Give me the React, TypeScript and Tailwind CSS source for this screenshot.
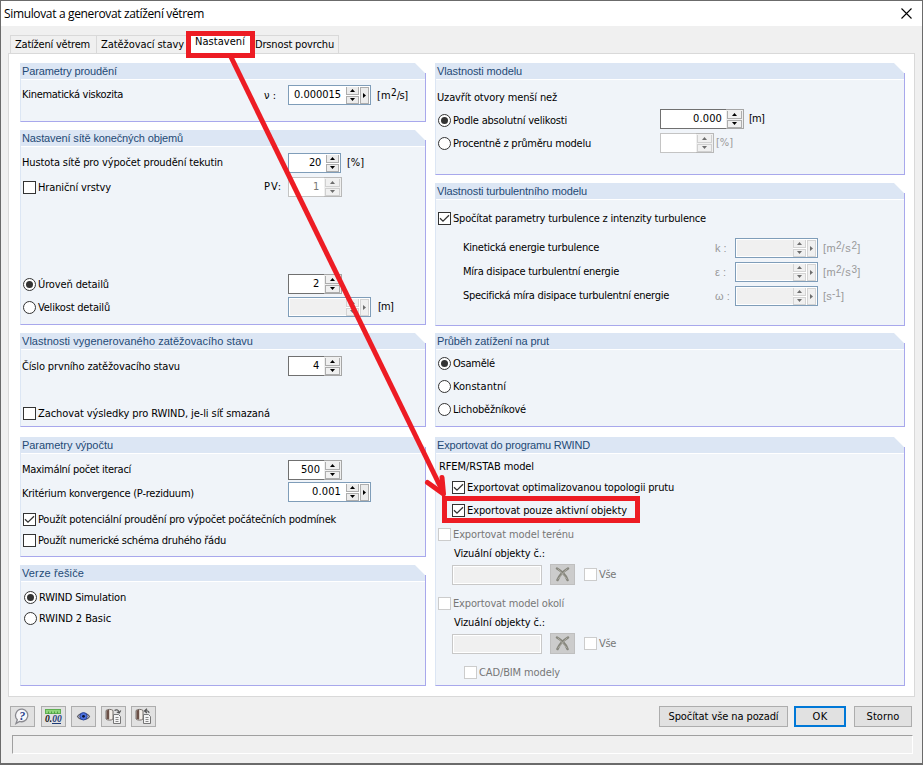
import { useLayoutEffect, useRef } from "react";
import type { ReactNode } from "react";

/** Text whose tracking is adjusted so that it spans `w` pixels. */
function Label({ w, className = "", children }: { w: number; className?: string; children: string }) {
  const ref = useRef<HTMLSpanElement>(null);
  useLayoutEffect(() => {
    const el = ref.current;
    if (!el) return;
    el.style.letterSpacing = "0px";
    const natural = el.getBoundingClientRect().width;
    el.style.letterSpacing = `${(w - natural) / children.length}px`;
  }, [w, children]);
  return (
    <span ref={ref} className={`inline-block shrink-0 whitespace-pre ${className}`}>
      {children}
    </span>
  );
}

function Panel({ title, w, className, children }: { title: string; w: number; className: string; children: ReactNode }) {
  return (
    <section className={`flex flex-col ${className}`}>
      <header className="flex h-4 shrink-0 items-center bg-[#dce6f4] pl-[2px] text-[#1f4a76] [clip-path:polygon(0_0,calc(100%-11px)_0,calc(100%-1px)_10px,100%_10px,100%_100%,0_100%)] [font-family:'Liberation_Sans',Arial,sans-serif] border-r border-[#a8a8ec]">
        <Label w={w} className="text-[11px] leading-4">{title}</Label>
      </header>
      <div className="flex grow flex-col border-r border-b border-l border-r-[#a8a8ec] border-b-[#a8a8ec] border-l-[#dce6f4] bg-[#f0f4f9] shadow-[inset_0_1px_0_#fff] pl-px">
        {children}
      </div>
    </section>
  );
}

function Row({ className = "", children }: { className?: string; children: ReactNode }) {
  return <div className={`flex h-5 shrink-0 items-center ${className}`}>{children}</div>;
}

function Tick({ label, w, checked, disabled, className = "" }: { label: string; w: number; checked?: boolean; disabled?: boolean; className?: string }) {
  return (
    <label className={`flex items-center gap-[2px] ${className}`}>
      <span className={`flex size-[13px] shrink-0 items-center justify-center border bg-white ${disabled ? "border-[#ccc]" : "border-[#333]"}`}>
        {checked && (
          <svg width="11" height="11" viewBox="0 0 11 11" fill="none" stroke="#333" strokeWidth="1.3">
            <path d="M1 5.2 4 8.2 10 2.2" />
          </svg>
        )}
      </span>
      <Label w={w} className={disabled ? "pt-px text-[#777]" : "pt-px"}>{label}</Label>
    </label>
  );
}

function Radio({ label, w, checked, className = "" }: { label: string; w: number; checked?: boolean; className?: string }) {
  return (
    <label className={`flex items-center gap-[2px] ${className}`}>
      <span className="flex size-[13px] shrink-0 items-center justify-center rounded-full border border-[#333] bg-white">
        {checked && <span className="size-[7px] rounded-full bg-[#333]" />}
      </span>
      <Label w={w} className="pt-px">{label}</Label>
    </label>
  );
}

function SpinButtons({ disabled, framed }: { disabled?: boolean; framed?: boolean }) {
  const tone = disabled ? "border-[#d4d4d4] bg-[#f0f0f0]" : "border-[#adadad] bg-[#ececec]";
  const fill = disabled ? "#6d6d6d" : "#000";
  return (
    <span className={`flex w-[13px] shrink-0 flex-col gap-px ${framed ? "mr-px" : ""}`}>
      <span className={`flex h-2 items-center justify-center border-r border-b border-l ${tone}`}>
        <svg width="5" height="3" viewBox="0 0 5 3" fill={fill}><path d="M2.5 0 5 3H0Z" /></svg>
      </span>
      <span className={`flex h-2 items-center justify-center border ${tone}`}>
        <svg width="5" height="3" viewBox="0 0 5 3" fill={fill}><path d="M2.5 3 5 0H0Z" /></svg>
      </span>
    </span>
  );
}

/** Numeric field with an integrated blue frame; `menu` adds the arrow button. */
function FramedSpin({ value, w, menu, disabled, className }: { value?: string; w?: number; menu?: boolean; disabled?: boolean; className: string }) {
  return (
    <span className={`flex h-5 shrink-0 items-center border border-[#7f9db9] bg-white p-px ${className}`}>
      <span className={`flex h-4 grow items-center justify-end pr-[5px] ${disabled ? "bg-[#f0f0f0]" : ""}`}>
        {value && <Label w={w ?? 12}>{value}</Label>}
      </span>
      <SpinButtons disabled={disabled} framed={menu} />
      {menu && (
        <span className={`flex h-[17px] w-[9px] items-center justify-center border ${disabled ? "border-[#d4d4d4] bg-[#f0f0f0]" : "border-[#adadad] bg-[#ececec]"}`}>
          <svg width="3" height="5" viewBox="0 0 3 5" fill={disabled ? "#6d6d6d" : "#000"}><path d="M0 0 3 2.5 0 5Z" /></svg>
        </span>
      )}
    </span>
  );
}

/** Edit box with a separate up-down control on its right. */
function BuddySpin({ value, w, disabled, className }: { value?: string; w?: number; disabled?: boolean; className: string }) {
  return (
    <span className={`flex h-5 shrink-0 ${className}`}>
      <span className={`flex grow items-center justify-end border-y border-l bg-white pr-1 ${disabled ? "border-[#c4c4c4] text-[#777]" : "border-[#707070]"}`}>
        {value && <Label w={w ?? 7}>{value}</Label>}
      </span>
      <span className={`flex w-[18px] items-center justify-center border-y border-r bg-[#f0f0f0] ${disabled ? "border-[#b8b8b8]" : "border-[#a6a6a6]"}`}>
        <span className="flex w-[15px] flex-col gap-px">
          <span className={`flex h-2 items-center justify-center border-r border-b border-l ${disabled ? "border-[#d0d0d0]" : "border-[#adadad]"}`}>
            <svg width="5" height="3" viewBox="0 0 5 3" fill={disabled ? "#6d6d6d" : "#000"}><path d="M2.5 0 5 3H0Z" /></svg>
          </span>
          <span className={`flex h-2 items-center justify-center border ${disabled ? "border-[#d0d0d0]" : "border-[#adadad]"}`}>
            <svg width="5" height="3" viewBox="0 0 5 3" fill={disabled ? "#6d6d6d" : "#000"}><path d="M2.5 3 5 0H0Z" /></svg>
          </span>
        </span>
      </span>
    </span>
  );
}

function VisualObjects() {
  return (
    <Row className="h-[21px] pl-[15px]">
      <span className="h-5 w-[90px] border border-[#c8c8c8] bg-[#f0f0f0] shadow-[inset_0_0_0_1px_#fff]" />
      <span className="ml-2 flex h-[21px] w-[25px] items-center justify-center border border-[#bfbfbf] bg-[#ccc]">
        <svg width="15" height="15" viewBox="0 0 15 15" fill="none" stroke="#85857c" strokeLinecap="round">
          <path d="M2 1.5C5 3 11 8 12.5 13M13 1.500C9 4 4 9 2.500 13" strokeWidth="2.500" />
          <path d="M3 2 12 12M12 2 3 12" stroke="#b5b4ac" strokeWidth=".8" />
        </svg>
      </span>
      <Tick label="Vše" w={17} disabled className="ml-[9px]" />
    </Row>
  );
}

function Turbulence({ label, w, symbol, unit, power, second, unitW, className = "" }: { label: string; w: number; symbol: string; unit: string; power: string; second?: string; unitW: number; className?: string }) {
  return (
    <Row className={className}>
      <div className="w-[278px] pl-[26px]"><Label w={w}>{label}</Label></div>
      <span className="w-[20px] whitespace-pre text-[#999] [font-family:'Liberation_Sans',Arial,sans-serif]">{symbol} :</span>
      <FramedSpin disabled menu className="w-[83px]" />
      <span className="flex pl-[5px] text-[#999] [font-family:'Liberation_Sans',Arial,sans-serif]">
        <Label w={unitW}>{unit}</Label>
        <span className="-mt-[2px] text-[10px]">{power}</span>
        {second && <Label w={10}>/s</Label>}
        {second && <span className="-mt-[2px] text-[10px]">{second}</span>}
        <span>]</span>
      </span>
    </Row>
  );
}

function ToolButton({ children, className = "" }: { children: ReactNode; className?: string }) {
  return (
    <button className={`flex h-[21px] w-[25px] items-center justify-center border border-[#adadad] bg-[#e1e1e1] ${className}`}>{children}</button>
  );
}

function CopyIcon({ out }: { out?: boolean }) {
  return (
    <svg width="17" height="17" viewBox="0 0 17 17" fill="none">
      <path d="M1 2.500C2.500 1 6.500 1 8 2.500V11C6.500 12.500 2.500 12.500 1 11Z" fill="#f4efe9" stroke="#77706c" />
      <path d="M1.500 2.800C2.500 1.800 3.500 1.800 4.200 1.800V11.500L1.500 11Z" fill="#6b5148" />
      <path d="M8.500 6.500h5l2 2v7h-7Z" fill="#f5f5f5" stroke="#777" />
      <path d="M10.500 9.500h3M10.500 11.500h3M10.500 13.500h3" stroke="#888" />
      {out
        ? <path d="M14 5C14 3 12 2.500 10 3M12 .8 9.500 3 12 5" stroke="#555" strokeWidth="1.200" />
        : <path d="M9.500 2.500C11.500 1 14 2 14 4.500M11.800 4 14.200 5 15.800 2.500" stroke="#555" strokeWidth="1.200" />}
    </svg>
  );
}

export default function App() {
  return (
    <div className="relative flex h-[765px] w-[923px] flex-col overflow-hidden border-t border-r border-b-2 border-l border-[#6b6b6b] bg-[#f0f0f0] text-[11px] leading-[14px] text-black [font-family:'DejaVu_Sans_Condensed','DejaVu_Sans',Tahoma,sans-serif]">
      <div className="flex h-[25px] shrink-0 items-center justify-between bg-white pr-[10px] pl-[3px]">
        <Label w={200} className="text-[12px] [font-family:'Open_Sans','Noto_Sans',sans-serif]">Simulovat a generovat zatížení větrem</Label>
        <svg width="11" height="11" viewBox="0 0 11 11" stroke="#000" strokeWidth="1.1"><path d="m.5.5 10 10m0-10-10 10" /></svg>
      </div>

      <nav className="flex h-[27px] shrink-0 items-end pl-[9px]">
        <div className="flex h-[18px] w-[87px] items-center border-x border-t border-[#d9d9d9] pl-[4px]"><Label w={75}>Zatížení větrem</Label></div>
        <div className="flex h-[18px] w-[91px] items-center border-t border-[#d9d9d9] pl-[4px]"><Label w={83}>Zatěžovací stavy</Label></div>
        <div className="z-10 -mb-px flex h-[22px] w-[66px] items-center bg-white pb-[2px] pl-[7px]"><Label w={50}>Nastavení</Label></div>
        <div className="flex h-[18px] w-[85px] items-center border-t border-r border-[#d9d9d9] pl-px"><Label w={79}>Drsnost povrchu</Label></div>
      </nav>

      <main className="ml-[7px] flex h-[644px] w-[907px] shrink-0 gap-[9px] border border-[#d9d9d9] bg-white pt-[9px] pl-[11px]">
        <div className="flex w-[406px] flex-col gap-2">
          <Panel title="Parametry proudění" w={95} className="h-[59px]">
            <Row className="mt-[6px]">
              <div className="w-[242px]"><Label w={101}>Kinematická viskozita</Label></div>
              <span className="w-[24px] whitespace-pre pt-0.5">ν :</span>
              <FramedSpin value="0.000015" w={47} menu className="w-[83px]" />
              <span className="flex pt-px pl-[6px]"><Label w={14}>[m</Label><span className="-mt-[3px] text-[10px]">2</span><Label w={11}>/s]</Label></span>
            </Row>
          </Panel>
          <Panel title="Nastavení sítě konečných objemů" w={161} className="h-[195px]">
            <Row className="mt-[7px]">
              <div className="w-[266px]"><Label w={201}>Hustota sítě pro výpočet proudění tekutin</Label></div>
              <FramedSpin value="20" w={12} className="w-[53px]" />
              <Label w={17} className="ml-[6px]">[%]</Label>
            </Row>
            <Row className="mt-1">
              <Tick label="Hraniční vrstvy" w={73} className="w-[242px] pl-px" />
              <span className="w-[24px]"><Label w={18}>PV:</Label></span>
              <BuddySpin value="1" disabled className="w-[54px]" />
            </Row>
            <Row className="mt-[77px]">
              <Radio label="Úroveň detailů" w={71} checked className="w-[266px] pt-px pl-px" />
              <BuddySpin value="2" className="w-[54px]" />
            </Row>
            <Row className="mt-[3px]">
              <Radio label="Velikost detailů" w={72} className="w-[266px] pl-px" />
              <FramedSpin disabled menu className="w-[83px]" />
              <Label w={15} className="ml-[7px]">[m]</Label>
            </Row>
          </Panel>
          <Panel title="Vlastnosti vygenerovaného zatěžovacího stavu" w={231} className="h-[94px]">
            <Row className="mt-[7px]">
              <div className="w-[266px] pt-[2px]"><Label w={158}>Číslo prvního zatěžovacího stavu</Label></div>
              <BuddySpin value="4" className="w-[54px]" />
            </Row>
            <Row className="mt-[27px]"><Tick label="Zachovat výsledky pro RWIND, je-li síť smazaná" w={232} className="pl-px" /></Row>
          </Panel>
          <Panel title="Parametry výpočtu" w={91} className="mt-[2px] h-[120px]">
            <Row className="mt-[7px]">
              <div className="w-[266px]"><Label w={109}>Maximální počet iterací</Label></div>
              <BuddySpin value="500" w={19} className="w-[54px]" />
            </Row>
            <Row className="mt-[2px]">
              <div className="w-[266px] pt-[3px]"><Label w={172}>Kritérium konvergence (P-reziduum)</Label></div>
              <FramedSpin value="0.001" w={29} menu className="w-[83px]" />
            </Row>
            <Row className="mt-[7px]"><Tick label="Použít potenciální proudění pro výpočet počátečních podmínek" w={298} checked className="pl-px" /></Row>
            <Row className="mt-px"><Tick label="Použít numerické schéma druhého řádu" w={188} className="pl-px" /></Row>
          </Panel>
          <Panel title="Verze řešiče" w={62} className="h-[121px]">
            <Row className="mt-[6px]"><Radio label="RWIND Simulation" w={87} checked className="pl-[2px]" /></Row>
            <Row className="mt-px"><Radio label="RWIND 2 Basic" w={72} className="pl-[2px]" /></Row>
          </Panel>
        </div>

        <div className="flex w-[470px] flex-col gap-2">
          <Panel title="Vlastnosti modelu" w={85} className="h-[112px]">
            <Row className="mt-[9px]"><Label w={120}>Uzavřít otvory menší než</Label></Row>
            <Row className="mt-px">
              <Radio label="Podle absolutní velikosti" w={114} checked className="w-[223px] pt-[2px] pl-px" />
              <BuddySpin value="0.000" w={29} className="w-[84px]" />
              <Label w={15} className="ml-[5px]">[m]</Label>
            </Row>
            <Row className="mt-1">
              <Radio label="Procentně z průměru modelu" w={138} className="w-[223px] pt-px pl-px" />
              <BuddySpin disabled className="w-[54px]" />
              <Label w={17} className="ml-[2px] text-[#999]">[%]</Label>
            </Row>
          </Panel>
          <Panel title="Vlastnosti turbulentního modelu" w={150} className="h-[143px]">
            <Row className="mt-[9px]"><Tick label="Spočítat parametry turbulence z intenzity turbulence" w={253} checked className="pt-px pl-px" /></Row>
            <Turbulence label="Kinetická energie turbulence" w={136} symbol="k" unit="[m" power="2" second="2" unitW={13} className="mt-[10px]" />
            <Turbulence label="Míra disipace turbulentní energie" w={156} symbol="ε" unit="[m" power="2" second="3" unitW={13} className="mt-1" />
            <Turbulence label="Specifická míra disipace turbulentní energie" w={206} symbol="ω" unit="[s" power="-1" unitW={9} className="mt-1" />
          </Panel>
          <Panel title="Průběh zatížení na prut" w={112} className="-mt-px h-[94px]">
            <Row className="mt-1"><Radio label="Osamělé" w={42} checked className="pl-px" /></Row>
            <Row className="mt-[3px]"><Radio label="Konstantní" w={53} className="pl-px" /></Row>
            <Row className="mt-[3px]"><Radio label="Lichoběžníkové" w={73} className="pl-px" /></Row>
          </Panel>
          <Panel title="Exportovat do programu RWIND" w={153} className="mt-[2px] h-[249px]">
            <Row className="mt-1 pl-[2px]"><Label w={95}>RFEM/RSTAB model</Label></Row>
            <Row><Tick label="Exportovat optimalizovanou topologii prutu" w={207} checked className="pl-[15px]" /></Row>
            <Row className="mt-[3px]"><Tick label="Exportovat pouze aktivní objekty" w={160} checked className="pl-[15px]" /></Row>
            <Row className="mt-1"><Tick label="Exportovat model terénu" w={121} disabled className="pl-px" /></Row>
            <Row className="pl-[17px]"><Label w={91}>Vizuální objekty č.:</Label></Row>
            <VisualObjects />
            <Row className="mt-[8px]"><Tick label="Exportovat model okolí" w={111} disabled className="pl-px" /></Row>
            <Row className="pl-[17px]"><Label w={91}>Vizuální objekty č.:</Label></Row>
            <VisualObjects />
            <Row className="mt-[8px]"><Tick label="CAD/BIM modely" w={81} disabled className="pl-[27px]" /></Row>
          </Panel>
        </div>
      </main>

      <footer className="flex h-[38px] shrink-0 items-center pr-[10px] pl-[9px]">
        <ToolButton>
          <svg width="17" height="17" viewBox="0 0 17 17">
            <path d="M8.500 1.200a6.300 6.300 0 1 1-3 12.200L2 15.500l1.300-3.700A6.300 6.300 0 0 1 8.500 1.200Z" fill="#f7f7fa" stroke="#8a8a90" strokeWidth="1.300" />
            <text x="5.300" y="12" fontSize="12" fontWeight="bold" fontStyle="italic" fontFamily="Liberation Serif" fill="#26408c">?</text>
          </svg>
        </ToolButton>
        <ToolButton className="ml-[6px]">
          <svg width="19" height="17" viewBox="0 0 19 17">
            <rect x="1.500" y="1.500" width="15" height="4" fill="#8fd67c" stroke="#5fae52" />
            <path d="M4.500 3.500V6M7.500 3.500V6M10.500 3.500V6M13.500 3.500V6" stroke="#4fa043" />
            <text x="1" y="14" fontSize="9.500" fontWeight="bold" fontStyle="italic" fontFamily="Liberation Serif" fill="#111">0.<tspan fill="#1d3c78">00</tspan></text>
            <path d="M8 15.500h9" stroke="#1d3c78" />
          </svg>
        </ToolButton>
        <ToolButton className="ml-[5px]">
          <svg width="15" height="13" viewBox="0 0 15 13">
            <path d="M1.500 6.500C4 2.500 11 2.500 13.500 6.500 11 10.500 4 10.500 1.500 6.500Z" fill="#d8d8e0" stroke="#5b5b66" strokeWidth="1.200" />
            <circle cx="7.500" cy="6.300" r="3.700" fill="#4a70e0" stroke="#2c4596" />
            <circle cx="7.500" cy="6.300" r="1.400" fill="#0a1230" />
          </svg>
        </ToolButton>
        <ToolButton className="ml-[5px]"><CopyIcon /></ToolButton>
        <ToolButton className="ml-[5px]"><CopyIcon out /></ToolButton>
        <button className="ml-auto flex h-[21px] w-[129px] items-center justify-center border border-[#adadad] bg-[#e1e1e1] pt-px"><Label w={110}>Spočítat vše na pozadí</Label></button>
        <button className="ml-[6px] flex h-[21px] w-[52px] items-center justify-center border-2 border-[#0078d7] bg-[#e1e1e1] pt-px"><Label w={15}>OK</Label></button>
        <button className="ml-2 flex h-[21px] w-[58px] items-center justify-center border border-[#adadad] bg-[#e1e1e1] pt-px"><Label w={33}>Storno</Label></button>
      </footer>
      <div className="ml-[11px] h-[19px] w-[901px] shrink-0 border border-t-[#a0a0a0] border-r-white border-b-white border-l-[#a0a0a0]" />

      {/* Callout drawn over the dialog */}
      <svg className="pointer-events-none absolute -top-px -left-px z-20" width="923" height="765" fill="none" stroke="#ed1c24" strokeWidth="5">
        <rect x="188.500" y="33.500" width="64" height="22" />
        <rect x="444.500" y="498.500" width="193" height="22" />
        <path d="M231 57 442 490" />
        <path d="M427.500 482.500 443.500 494 442 477.500" strokeLinecap="round" strokeLinejoin="round" strokeWidth="5" />
      </svg>
    </div>
  );
}
